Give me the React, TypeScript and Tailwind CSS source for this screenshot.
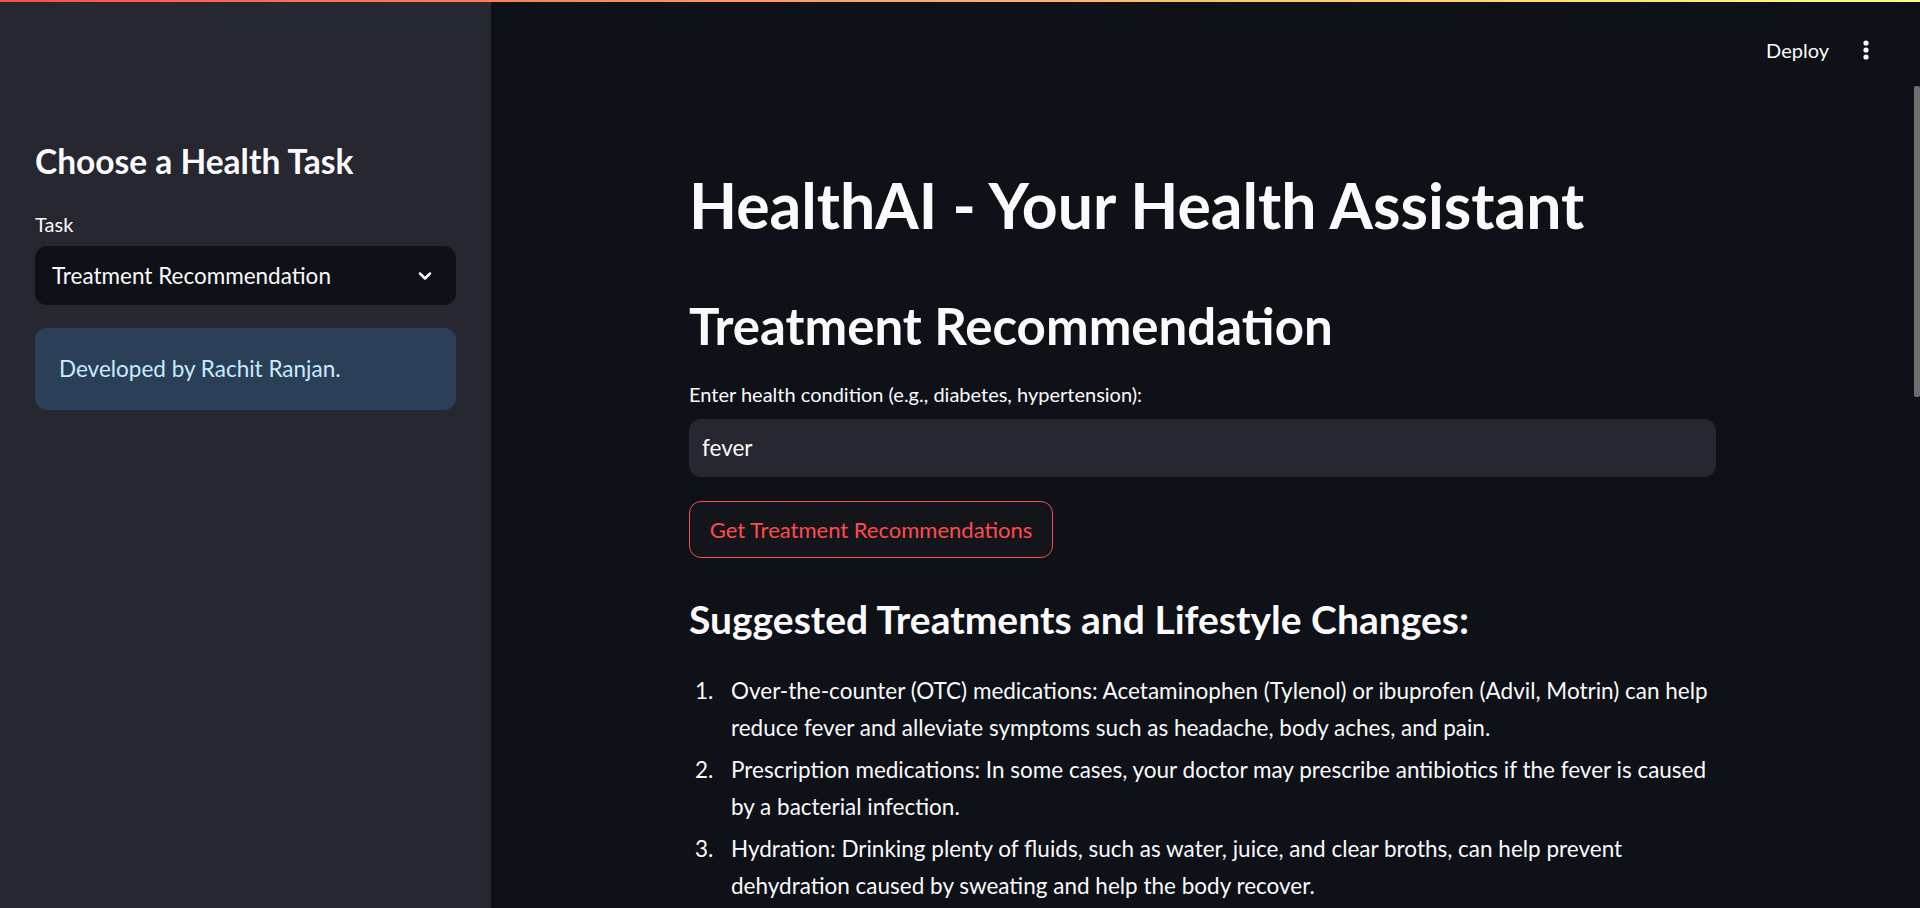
import React from "react";

const font = "font-['Lato','Liberation_Sans',sans-serif]";

const items = [
  "Over-the-counter (OTC) medications: Acetaminophen (Tylenol) or ibuprofen (Advil, Motrin) can help reduce fever and alleviate symptoms such as headache, body aches, and pain.",
  "Prescription medications: In some cases, your doctor may prescribe antibiotics if the fever is caused by a bacterial infection.",
  "Hydration: Drinking plenty of fluids, such as water, juice, and clear broths, can help prevent dehydration caused by sweating and help the body recover.",
];

const App = () => {
  return (
    <div className={`relative flex h-[908px] w-[1920px] overflow-hidden ${font} text-[#fafafa]`}>
      {/* top decoration */}
      <div className="absolute left-0 right-0 top-0 z-10 h-[2px] bg-gradient-to-r from-[#ff4b4b] to-[#fffd80]" />

      {/* Sidebar */}
      <aside className="w-[491px] shrink-0 bg-[#262730] px-[35px] pt-[141px]">
        <h2 className="text-[33.5px] font-bold leading-[41px]">Choose a Health Task</h2>
        <label className="mt-[27px] block text-[20px] leading-[30px]">Task</label>
        <div className="mt-[7px] flex h-[59px] items-center justify-between rounded-[12px] bg-[#0e1117] pl-[17px] pr-[21px]">
          <span className="text-[22.5px]">Treatment Recommendation</span>
          <svg width="20" height="20" viewBox="0 0 24 24" fill="none" stroke="#fafafa" strokeWidth="3" strokeLinecap="round" strokeLinejoin="round">
            <path d="M6 9l6 6 6-6" />
          </svg>
        </div>
        <div className="mt-[23px] flex h-[82px] items-center rounded-[12px] bg-[#2b3f57] px-[24px] text-[22.5px] text-[#c7ebff]">
          Developed by Rachit Ranjan.
        </div>
      </aside>

      {/* Main */}
      <main className="relative flex-1 bg-[#0e1117]">
        <header className="flex h-[100px] items-center justify-end gap-[33px] pr-[50px]">
          <span className="text-[20px]">Deploy</span>
          <svg width="8" height="24" viewBox="0 0 8 24" fill="#fafafa">
            <circle cx="4" cy="5" r="2.6" />
            <circle cx="4" cy="12" r="2.6" />
            <circle cx="4" cy="19" r="2.6" />
          </svg>
        </header>
        {/* scrollbar thumb */}
        <div className="absolute right-0 top-[86px] h-[311px] w-[6px] rounded-[2px] bg-[#6d6d70]" />

        <div className="ml-[198px] w-[1027px]">
          <h1 className="mt-[68px] text-[62.5px] font-bold leading-[74px]">HealthAI - Your Health Assistant</h1>
          <h2 className="mt-[53px] text-[51px] font-bold leading-[61px]">Treatment Recommendation</h2>
          <label className="mt-[23px] block text-[20px] leading-[30px]">
            Enter health condition (e.g., diabetes, hypertension):
          </label>
          <div className="mt-[10px] flex h-[58px] items-center rounded-[12px] bg-[#262730] px-[13px] text-[22.5px]">
            fever
          </div>
          <button className="mt-[24px] flex h-[57px] w-[364px] items-center justify-center rounded-[12px] border border-[#ff4b4b] bg-[#13151b] text-[22px] text-[#ff4b4b]">
            Get Treatment Recommendations
          </button>
          <h3 className="mt-[37px] text-[39px] font-bold leading-[48px]">
            Suggested Treatments and Lifestyle Changes:
          </h3>
          <ol className="mt-[29px] pl-[42px] text-[22.5px] leading-[37px]">
            {items.map((t, i) => (
              <li key={i} className="relative mb-[5px]">
                <span className="absolute left-[-36px]">{i + 1}.</span>
                {t}
              </li>
            ))}
          </ol>
        </div>
      </main>
    </div>
  );
};

export default App;
